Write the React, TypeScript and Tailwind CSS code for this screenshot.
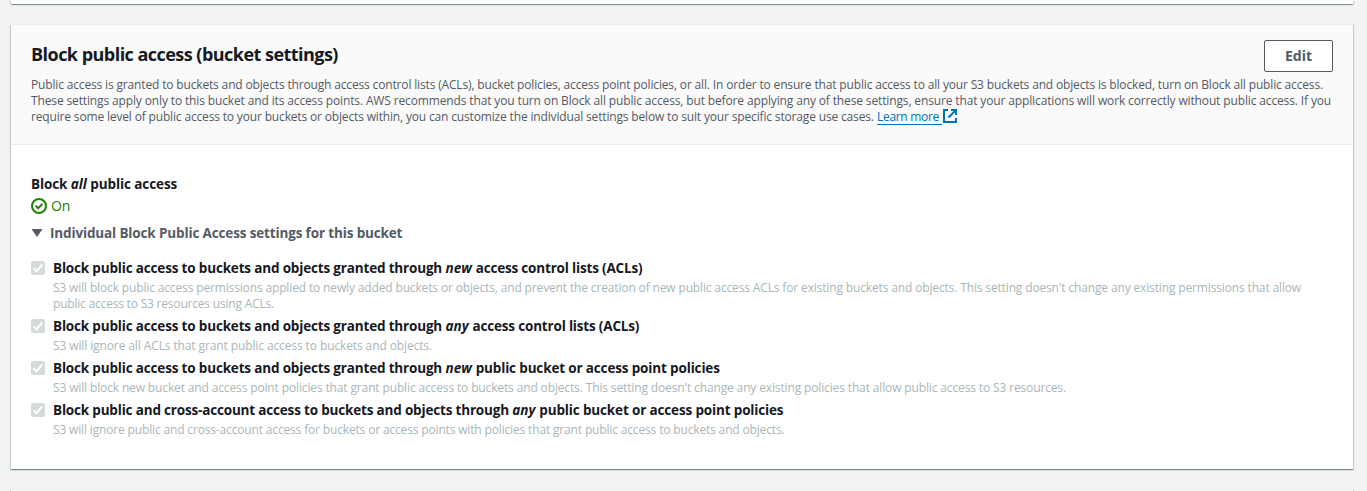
import type { ReactNode } from "react";

const cardShadow =
  "shadow-[0_1px_1px_0_rgba(0,28,36,0.3),1px_1px_1px_0_rgba(0,28,36,0.15),-1px_1px_1px_0_rgba(0,28,36,0.15)]";

type Setting = { title: ReactNode; lines: [string, string][] };

const settings: Setting[] = [
  {
    title: (
      <>
        <span className="tracking-[-0.168px]">Block public access to buckets and objects granted through </span>
        <em className="tracking-[0.1px]">new </em>
        <span className="tracking-[-0.18px]">access control lists (ACLs)</span>
      </>
    ),
    lines: [
      [
        "tracking-[-0.145px]",
        "S3 will block public access permissions applied to newly added buckets or objects, and prevent the creation of new public access ACLs for existing buckets and objects. This setting doesn't change any existing permissions that allow",
      ],
      ["tracking-[-0.2px]", "public access to S3 resources using ACLs."],
    ],
  },
  {
    title: (
      <>
        <span className="tracking-[-0.168px]">Block public access to buckets and objects granted through </span>
        <em className="tracking-[0.1px]">any </em>
        <span className="tracking-[-0.18px]">access control lists (ACLs)</span>
      </>
    ),
    lines: [["tracking-[-0.11px]", "S3 will ignore all ACLs that grant public access to buckets and objects."]],
  },
  {
    title: (
      <>
        <span className="tracking-[-0.168px]">Block public access to buckets and objects granted through </span>
        <em className="tracking-[0.1px]">new </em>
        <span className="tracking-[-0.15px]">public bucket or access point policies</span>
      </>
    ),
    lines: [
      [
        "tracking-[-0.138px]",
        "S3 will block new bucket and access point policies that grant public access to buckets and objects. This setting doesn't change any existing policies that allow public access to S3 resources.",
      ],
    ],
  },
  {
    title: (
      <>
        <span className="tracking-[-0.177px]">Block public and cross-account access to buckets and objects through </span>
        <em className="tracking-[0.1px]">any </em>
        <span className="tracking-[-0.15px]">public bucket or access point policies</span>
      </>
    ),
    lines: [
      [
        "tracking-[-0.157px]",
        "S3 will ignore public and cross-account access for buckets or access points with policies that grant public access to buckets and objects.",
      ],
    ],
  },
];

function SettingRow({ title, lines }: Setting) {
  return (
    <li className="flex gap-2">
      <span className="mt-[3px] flex size-3.5 shrink-0 items-center justify-center rounded-[2px] bg-[#d5dbdb]">
        <svg viewBox="0 0 14 14" className="size-3.5" fill="none" stroke="#fff" strokeWidth="2">
          <path d="M2.5 7.2 5.6 10.2 11.3 3.4" />
        </svg>
      </span>
      <div>
        <div className="text-[13.5px]/5 font-bold text-[#16191f]">{title}</div>
        <div className="mt-0.5 text-xs/4 text-[#aab7b8]">
          {lines.map(([tracking, text]) => (
            <p key={text} className={tracking}>
              {text}
            </p>
          ))}
        </div>
      </div>
    </li>
  );
}

export default function App() {
  return (
    <div className="flex h-[491px] flex-col gap-5 overflow-hidden bg-[#f2f3f3] pr-3.5 pl-[11px] font-['Open_Sans','Noto_Sans',sans-serif] whitespace-nowrap">
      <div className={`h-1 shrink-0 bg-white ${cardShadow}`} />
      <section className={`h-[445px] shrink-0 border-t border-[#eaeded] bg-white ${cardShadow}`}>
        <header className="h-[120px] border-b border-[#eaeded] bg-[#fafafa] px-5 pt-[15px]">
          <div className="flex h-8 items-start justify-between">
            <h2 className="mt-0.5 text-lg/6 font-bold tracking-[-0.53px] text-[#16191f]">
              Block public access (bucket settings)
            </h2>
            <button className="h-8 w-[69px] rounded-[2px] border border-[#545b64] bg-white text-sm font-bold text-[#545b64]">
              Edit
            </button>
          </div>
          <div className="mt-[5px] text-xs/4 text-[#545b64]">
            <p className="tracking-[-0.158px]">
              Public access is granted to buckets and objects through access control lists (ACLs), bucket policies, access point policies, or all. In order to ensure that public access to all your S3 buckets and objects is blocked, turn on Block all public access.
            </p>
            <p className="tracking-[-0.136px]">
              These settings apply only to this bucket and its access points. AWS recommends that you turn on Block all public access, but before applying any of these settings, ensure that your applications will work correctly without public access. If you
            </p>
            <p className="flex">
              <span className="w-[846px] tracking-[-0.16px]">
                require some level of public access to your buckets or objects within, you can customize the individual settings below to suit your specific storage use cases.
              </span>
              <a className="flex text-[#0073bb]">
                <span className="h-4 w-[65px] border-b border-[#0073bb] tracking-[-0.3px]">Learn more</span>
                <svg viewBox="0 0 16 16" className="-mt-px size-4" fill="none" stroke="currentColor" strokeWidth="2">
                  <path d="M6 2H2v12h12v-4M9 2h5v5M6.5 9.5 14 2" />
                </svg>
              </a>
            </p>
          </div>
        </header>
        <div className="px-5 pt-[29px]">
          <h3 className="text-[13.5px]/5 font-bold text-[#16191f]">
            <span className="tracking-[-0.1px]">Block </span>
            <em>all </em>
            <span className="tracking-[-0.1px]">public access</span>
          </h3>
          <div className="mt-0.5 flex h-5 items-center gap-1 text-sm/5 text-[#1d8102]">
            <svg viewBox="0 0 16 16" className="size-4" fill="none" stroke="currentColor" strokeWidth="2">
              <circle cx="8" cy="8" r="7" />
              <path d="m4.6 7.8 2.6 2.5 4.2-4.4" />
            </svg>
            <span className="tracking-[-0.242px]">On</span>
          </div>
          <div className="mt-[7px] flex h-5 items-center text-[#545b64]">
            <svg viewBox="0 0 12 10" className="h-2.5 w-3" fill="currentColor">
              <path d="M.5 1h11L6 9Z" />
            </svg>
            <h4 className="ml-[7px] text-[13.5px]/5 font-bold tracking-[-0.142px]">
              Individual Block Public Access settings for this bucket
            </h4>
          </div>
          <ul className="mt-[15px] flex flex-col gap-1">
            {settings.map((s, i) => (
              <SettingRow key={i} {...s} />
            ))}
          </ul>
        </div>
      </section>
      <div className={`h-5 shrink-0 border-t border-[#eaeded] bg-[#fafafa] ${cardShadow}`} />
    </div>
  );
}
